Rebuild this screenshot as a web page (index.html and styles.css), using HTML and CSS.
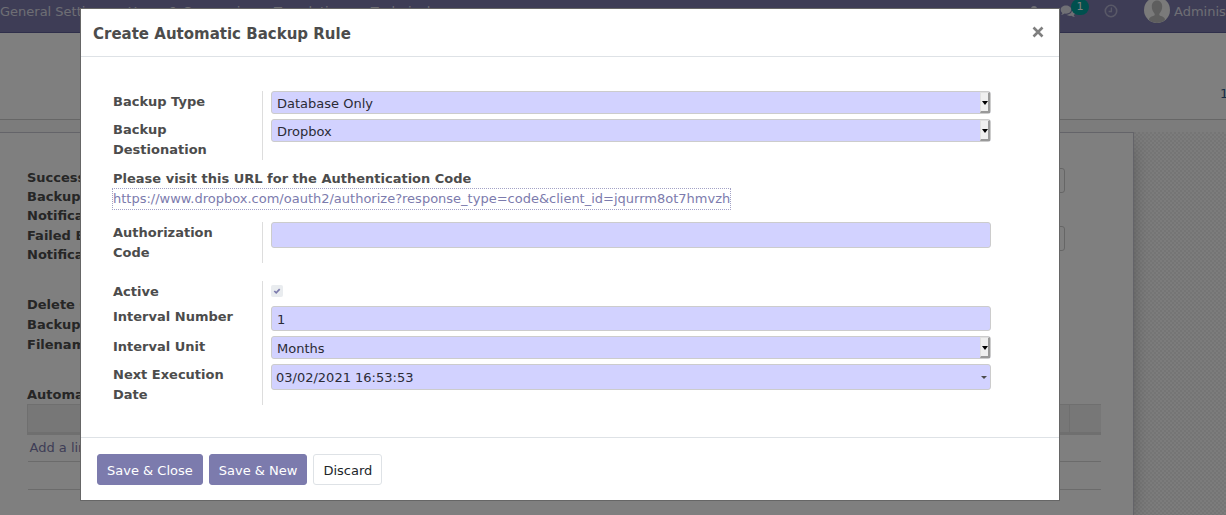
FILE: index.html
```html
<!DOCTYPE html>
<html lang="en">
<head>
<meta charset="utf-8">
<title>Create Automatic Backup Rule</title>
<link rel="stylesheet" href="styles.css">
</head>
<body>
<div class="app">
  <nav class="navbar">
    <a class="nav-link" href="#">General Settings</a>
    <a class="nav-link" href="#">Users &amp; Companies</a>
    <a class="nav-link" href="#">Translations</a>
    <a class="nav-link" href="#">Technical</a>
    <div class="systray">
      <svg class="icon" viewBox="0 0 16 16"><path d="M5 6a3 3 0 0 1 6 0zM4 7h8v5a4 4 0 0 1-8 0z" fill="currentColor"/><path d="M4.500 8 2 5.500M11.500 8 14 5.500M4 10.500H1M12 10.500h3M4 13l-2 2M12 13l2 2" stroke="currentColor" stroke-width="1.300"/></svg>
      <span class="chat">
        <svg class="icon" viewBox="0 0 16 16"><path d="M6 2.500c3 0 5.300 1.800 5.300 4.100S9 10.700 6 10.700l-1.300-.1c-.8.7-1.800 1.100-3 1.300-.3 0-.4-.2-.2-.4.5-.5.8-1 .9-1.600C1.200 9.200.7 8 .7 6.600.7 4.300 3 2.500 6 2.500z" fill="currentColor"/><path d="M12.300 5.800c1.800.7 3 2 3 3.500 0 1.100-.6 2.100-1.600 2.700.1.700.5 1.200.9 1.600.2.200.1.400-.2.400-1.200-.1-2.200-.6-3-1.200-2 .3-3.800-.1-5.100-1 3.600 0 6.100-2.300 6-6z" fill="currentColor"/></svg>
        <span class="badge">1</span>
      </span>
      <svg class="icon clock" viewBox="0 0 16 16"><circle cx="8" cy="8" r="5.700" fill="none" stroke="currentColor" stroke-width="1.600"/><path d="M8.400 4.500v4H5.600" fill="none" stroke="currentColor" stroke-width="1.300"/></svg>
      <svg class="avatar" viewBox="0 0 26 26"><circle cx="13" cy="13" r="13" fill="#f4f4f4"/><path d="M5 23.200c0-3 2-3.600 5.300-4.700.6-.3.6-1.500 0-2.300-1.500-1.700-2.500-4-2.500-6.700C7.800 6 9.800 3.500 13 3.500s5.200 2.500 5.200 6c0 2.700-1 5-2.500 6.700-.6.8-.6 2 0 2.300 3.300 1.100 5.300 1.700 5.300 4.700A13 13 0 0 1 5 23.200z" fill="#bdbdbd"/></svg>
      <span class="user">Administrator</span>
    </div>
  </nav>
  <div class="control-panel"><span class="pager">1</span></div>
  <main class="content">
    <div class="sheet">
      <div class="settings">
        <div class="setting-labels">
          <div>Success<br>Backup<br>Notification</div>
          <div>Failed Backup<br>Notification</div>
        </div>
        <div class="setting-inputs">
          <input class="bg-input" aria-label="Success notification">
          <input class="bg-input" aria-label="Failed notification">
        </div>
      </div>
      <div class="setting-labels later">Delete Old<br>Backups<br>Filename</div>
      <div class="list-title">Automatic Backups</div>
      <table class="list">
        <thead><tr><th></th><th class="narrow"></th></tr></thead>
        <tbody>
          <tr><td colspan="2"><a class="add" href="#">Add a line</a></td></tr>
          <tr><td colspan="2"></td></tr>
          <tr><td colspan="2"></td></tr>
        </tbody>
      </table>
    </div>
  </main>
</div>
<div class="backdrop">
  <div class="modal" role="dialog" aria-labelledby="title">
    <header class="modal-header">
      <h1 class="modal-title" id="title">Create Automatic Backup Rule</h1>
      <button class="close" aria-label="Close"><svg class="close-icon" viewBox="0 0 12 12"><path d="M1.500 1.500l9 9M10.500 1.500l-9 9" stroke="#7f7f7f" stroke-width="2.600"/></svg></button>
    </header>
    <form class="modal-body">
      <div class="group">
        <label class="label" for="type">Backup Type</label>
        <div class="field"><span class="select-box"><select class="control" id="type"><option>Database Only</option></select><span class="arrow"></span></span></div>
        <label class="label" for="dest">Backup Destionation</label>
        <div class="field"><span class="select-box"><select class="control" id="dest"><option>Dropbox</option></select><span class="arrow"></span></span></div>
      </div>
      <div class="notice">
        <strong class="notice-text">Please visit this URL for the Authentication Code</strong>
        <a class="auth-link" href="#">https://www.dropbox.com/oauth2/authorize?response_type=code&amp;client_id=jqurrm8ot7hmvzh</a>
      </div>
      <div class="group">
        <label class="label" for="code">Authorization Code</label>
        <div class="field"><input class="control" id="code" type="text"></div>
      </div>
      <div class="group">
        <label class="label" for="active">Active</label>
        <div class="field"><input class="check" id="active" type="checkbox" checked disabled></div>
        <label class="label" for="number">Interval Number</label>
        <div class="field"><input class="control number" id="number" type="text" value="1"></div>
        <label class="label" for="unit">Interval Unit</label>
        <div class="field"><span class="select-box"><select class="control" id="unit"><option>Months</option></select><span class="arrow"></span></span></div>
        <label class="label" for="next">Next Execution Date</label>
        <div class="field"><span class="select-box"><input class="control date" id="next" type="text" value="03/02/2021 16:53:53"><span class="caret"></span></span></div>
      </div>
    </form>
    <footer class="modal-footer">
      <button class="btn primary">Save &amp; Close</button>
      <button class="btn primary">Save &amp; New</button>
      <button class="btn">Discard</button>
    </footer>
  </div>
</div>
</body>
</html>
```
FILE: styles.css
```css
* { box-sizing: border-box; }
body {
  margin: 0;
  font: 13px/20px "DejaVu Sans", Verdana, sans-serif;
  color: #4c4c4c;
}
a { text-decoration: none; }
input, select, button { font: inherit; }

.app {
  height: 100vh;
  overflow: hidden;
  display: flex;
  flex-direction: column;
}
.navbar {
  display: flex;
  align-items: flex-start;
  gap: 19px;
  height: 33px;
  flex: none;
  padding-top: 2px;
  background: #7c7bad;
  border-bottom: 1px solid #5f5e97;
  overflow: hidden;
}
.nav-link, .user { color: #dddde8; white-space: nowrap; }
.systray {
  display: flex;
  align-items: flex-start;
  margin-left: auto;
  color: #e0e0ea;
}
.icon { width: 16px; height: 16px; margin-top: 1px; flex: none; display: block; }
.chat { position: relative; margin: 0 27px 0 18px; }
.clock { color: #b3b2cf; }
.badge {
  position: absolute;
  left: 11px;
  top: -3px;
  width: 18px;
  height: 16px;
  border-radius: 8px;
  background: #00a09d;
  color: #fff;
  font-size: 11px;
  line-height: 16px;
  text-align: center;
}
.avatar { width: 26px; height: 26px; margin: -5px 4px 0 25px; flex: none; }
.user { width: 52px; overflow: hidden; }
.control-panel {
  flex: none;
  display: flex;
  justify-content: flex-end;
  height: 87px;
  padding-top: 51px;
  background: #fff;
  border-bottom: 1px solid #cccccc;
}
.pager { width: 6px; color: #355c8c; }
.content {
  flex: 1;
  padding: 0 92px 0 0;
  border-top: 12px solid #f8f8f8;
  background: repeating-conic-gradient(#ebebeb 0 25%, #f8f8f8 0 50%) 0 0 / 4px 4px padding-box;
  overflow: hidden;
}
.sheet {
  min-height: 100%;
  padding: 35px 32px 0 27px;
  background: #fff;
  border: 1px solid #c8c8d3;
  border-left: 0;
  box-shadow: 0 5px 20px -8px #666;
}
.settings { display: flex; justify-content: space-between; }
.setting-labels {
  display: flex;
  flex-direction: column;
  gap: 1px;
  font-weight: bold;
  line-height: 19px;
}
.setting-inputs { display: flex; flex-direction: column; gap: 33px; width: 70%; margin-right: 36px; }
.bg-input { height: 25px; border: 1px solid #ccc; border-radius: 3px; }
.later { display: block; margin-top: 31px; line-height: 20px; }
.list-title { margin-top: 30px; font-weight: bold; }
.list { width: 100%; margin-top: -1px; border-collapse: collapse; }
.list th { height: 29px; background: #eee; border: 1px solid #dfdfdf; border-bottom: 3px solid #dfdfdf; border-right: 0; }
.list td { height: 28px; padding: 0 2px; border-bottom: 1px solid #d6d6d6; }
.narrow { width: 32px; }
.add { color: #7c7bad; }

.backdrop {
  position: fixed;
  inset: 0;
  padding: 8px 166px 0 80px;
  background: rgba(0, 0, 0, 0.5);
}
.modal { background: #fff; border: 1px solid #666; }
.modal-header {
  display: flex;
  align-items: center;
  justify-content: space-between;
  padding: 13px 15px 10px 12px;
  border-bottom: 1px solid #dee2e6;
}
.modal-title { margin: 0; font-size: 15px; line-height: 24px; }
.close { margin-bottom: 4px; padding: 0; border: 0; background: none; }
.close-icon { display: block; width: 12px; height: 12px; }
.modal-body { display: flex; flex-direction: column; padding: 34px 68px 32px 32px; }
.group { display: grid; grid-template-columns: 150px 1fr; }
.group + .group { margin-top: 18px; }
.label {
  padding: 1px 20px 4px 0;
  border-right: 1px solid #ddd;
  font-weight: bold;
}
.label:nth-last-child(2) { padding-bottom: 0; }
.field { padding: 0 0 5px 8px; }
.field:last-child { padding-bottom: 0; }
.control {
  display: block;
  width: 100%;
  height: 26px;
  padding: 2px 5px 0;
  border: 1px solid #ccc;
  border-radius: 3px;
  background: #d2d2ff;
  color: #2b2b35;
  appearance: none;
}
.number { height: 25px; }
select.control { height: 23px; }
.date { padding: 0 4px; }
.select-box { display: block; position: relative; }
.arrow {
  position: absolute;
  top: 1px;
  right: 1px;
  bottom: 1px;
  width: 10px;
  border: 1px solid #e0e0e0;
  border-right: 2px solid #999;
  border-bottom: 2px solid #999;
  background: #efefef;
  pointer-events: none;
}
.arrow::after, .caret {
  content: "";
  position: absolute;
  top: 8px;
  right: 0;
  border: 3px solid transparent;
  border-top: 4px solid #000;
  border-bottom: 0;
}
.caret { top: 12px; right: 4px; border-top: 3px solid #4c4c4c; }
.notice { display: flex; flex-direction: column; align-items: flex-start; margin: 9px 0 13px; }
.auth-link { color: #7c7bad; outline: 1px dotted #a3a2c6; white-space: nowrap; }
.check {
  display: block;
  appearance: none;
  width: 12px;
  height: 12px;
  margin: 4px 0;
  border-radius: 2px;
  background: #e9ecef url("data:image/svg+xml,%3Csvg xmlns='http://www.w3.org/2000/svg' viewBox='0 0 12 12'%3E%3Cpath d='M3.300 6l1.900 1.800L8.700 4.200' fill='none' stroke='%237c7bad' stroke-width='1.700'/%3E%3C/svg%3E");
}
.modal-footer { display: flex; gap: 6px; padding: 16px 16px 15px; border-top: 1px solid #dee2e6; }
.btn {
  height: 31px;
  padding: 2px 9px 0;
  border: 1px solid #dee2e6;
  border-radius: 3px;
  background: #fff;
  color: #212529;
}
.primary { border-color: #7c7bad; background: #7c7bad; color: #fff; }
```
